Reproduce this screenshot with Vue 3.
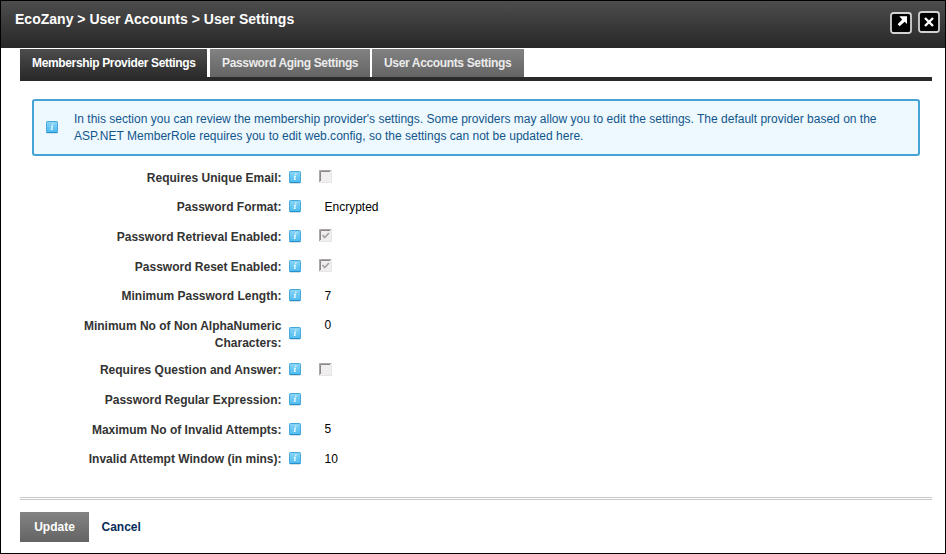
<script setup>
import { h } from 'vue'

const tabs = ['Membership Provider Settings', 'Password Aging Settings', 'User Accounts Settings']

const rows = [
  { label: ['Requires Unique Email:'], box: true, checked: false },
  { label: ['Password Format:'], value: 'Encrypted' },
  { label: ['Password Retrieval Enabled:'], box: true, checked: true },
  { label: ['Password Reset Enabled:'], box: true, checked: true },
  { label: ['Minimum Password Length:'], value: '7' },
  { label: ['Minimum No of Non AlphaNumeric', 'Characters:'], value: '0' },
  { label: ['Requires Question and Answer:'], box: true, checked: false },
  { label: ['Password Regular Expression:'], value: '' },
  { label: ['Maximum No of Invalid Attempts:'], value: '5' },
  { label: ['Invalid Attempt Window (in mins):'], value: '10' },
]

const InfoIcon = () =>
  h('svg', { width: 12, height: 14, viewBox: '0 0 12 14' }, [
    h('defs', [
      h('linearGradient', { id: 'info-fill', x1: 0, y1: 0, x2: 0, y2: 1 }, [
        h('stop', { offset: 0, 'stop-color': '#8bd6f5' }),
        h('stop', { offset: 1, 'stop-color': '#4fbbef' }),
      ]),
    ]),
    h('path', { d: 'M1 12.5H11', stroke: '#d3dfe5', 'stroke-width': 1 }),
    h('rect', { x: 0.5, y: 0.5, width: 11, height: 11, rx: 0.8, fill: 'url(#info-fill)', stroke: '#46a9de' }),
    h('path', { d: 'M0.5 11.5H11.5', stroke: '#2591cf', 'stroke-width': 1 }),
    h('path', { d: 'M6.1 2.5H7.5V3.7H6ZM5 4.8H7.1L6.3 8.2H6.9L6.7 9.1H4.7L5.5 5.7H4.8Z', fill: '#e6f7ff' }),
  ])
</script>

<template>
  <div class="window">
    <header class="titlebar">
      <h1>EcoZany &gt; User Accounts &gt; User Settings</h1>
      <div class="controls">
        <svg class="expand" width="22" height="22" viewBox="0 0 22 22">
          <rect x="1" y="1" width="20" height="20" rx="2.5" fill="#000" stroke="#d2d2d2" stroke-width="1.8" />
          <path d="M9.3 4.3H17V12L14.7 9.8L9.6 14.2L7.6 12.2L12.2 7.4Z" fill="#fff" />
        </svg>
        <svg width="22" height="22" viewBox="0 0 22 22">
          <rect x="1" y="1" width="20" height="20" rx="2.5" fill="#000" stroke="#d2d2d2" stroke-width="1.8" />
          <path d="M7 7L15 15M15 7L7 15" stroke="#fff" stroke-width="2.4" />
        </svg>
      </div>
    </header>

    <nav class="tabs">
      <a v-for="(tab, i) in tabs" :key="tab" class="tab" :class="['tab-' + i, { active: i === 0 }]"><span>{{ tab }}</span></a>
    </nav>

    <section class="notice">
      <InfoIcon />
      <p>
        <span>In this section you can review the membership provider's settings. Some providers may allow you to edit the settings. The default provider based on the</span><br />
        <span class="second">ASP.NET MemberRole requires you to edit web.config, so the settings can not be updated here.</span>
      </p>
    </section>

    <div class="form">
      <div v-for="row in rows" :key="row.label[0]" class="row" :class="{ tall: row.label.length > 1 }">
        <div class="label"><div v-for="line in row.label" :key="line">{{ line }}</div></div>
        <InfoIcon />
        <div class="value" :class="{ boxed: row.box }">
          <svg v-if="row.box" class="check" width="13" height="13" viewBox="0 0 13 13">
            <rect width="13" height="13" fill="#f0eeee" />
            <path d="M0 12.5H12.5V0" fill="none" stroke="#e7e5e5" />
            <path d="M0.5 12V0.5H12" fill="none" stroke="#aba7a7" />
            <path d="M1.5 11V1.5H11" fill="none" stroke="#8b8785" />
            <path v-if="row.checked" d="M3.5 6L5.7 8.6L10 4" fill="none" stroke="#a2a2a2" stroke-width="1.6" />
          </svg>
          <span v-else>{{ row.value }}</span>
        </div>
      </div>
    </div>

    <footer class="footer">
      <button class="update">Update</button>
      <a class="cancel">Cancel</a>
    </footer>
  </div>
</template>

<style>
body {
  margin: 0;
  background: #fff;
}
</style>

<style scoped>
.window {
  box-sizing: border-box;
  width: 946px;
  height: 554px;
  border: 1px solid #000;
  background: #fff;
  font: 12px/17px "Liberation Sans", Arial, sans-serif;
  color: #000;
  overflow: hidden;
  display: flex;
  flex-direction: column;
}
svg {
  display: block;
  flex: none;
}
.titlebar {
  flex: none;
  height: 47px;
  box-sizing: border-box;
  padding: 10px 5px 0 14px;
  display: flex;
  justify-content: space-between;
  background: linear-gradient(#4d4d4d, #272727);
}
h1 {
  margin: 0;
  font-size: 14px;
  line-height: 17px;
  font-weight: bold;
  letter-spacing: 0.01px;
  color: #fff;
  white-space: nowrap;
}
.controls {
  display: flex;
  gap: 6px;
}
.expand {
  margin-top: 1px;
}
.tabs {
  flex: none;
  margin: 1px 13px 0 19px;
  height: 28px;
  display: flex;
  border-bottom: 4px solid #2a2a2b;
}
.tab {
  box-sizing: border-box;
  height: 28px;
  padding: 6px 0 0 12px;
  font-weight: bold;
  letter-spacing: -0.35px;
  color: #ebebeb;
  white-space: nowrap;
  background: linear-gradient(#828282, #646464);
}
.tab-0 {
  width: 187px;
  margin-right: 3px;
}
.tab-1 {
  width: 160px;
  margin-right: 2px;
}
.tab-2 {
  width: 152px;
}
.tab.active {
  color: #fff;
  height: 29px;
  background: linear-gradient(#4d4d4d, #2a2a2b);
}
.notice {
  flex: none;
  box-sizing: border-box;
  margin: 18px 25px 0 31px;
  height: 57px;
  border: 2px solid #46a3d5;
  border-radius: 3px;
  background: #edf8ff;
  color: #12568b;
  padding: 10px 0 0 12px;
  display: flex;
}
.notice svg {
  margin-top: 10px;
}
.notice p {
  margin: 0 0 0 16px;
  white-space: nowrap;
}
.second {
  letter-spacing: 0.01px;
}
.form {
  flex: none;
  margin-top: 14px;
}
.row {
  height: 29.6px;
  display: flex;
}
.row:first-child {
  height: 29.45px;
}
.label {
  width: 280.5px;
  text-align: right;
  font-weight: bold;
  color: #333;
  white-space: nowrap;
}
.row > svg {
  margin: 1px 0 0 7.5px;
}
.row.tall {
  height: 44.5px;
}
.row.tall > svg {
  margin-top: 9px;
}
.value {
  margin-top: -0.5px;
  padding-left: 23.5px;
}
.value.boxed {
  margin-top: 0.45px;
  padding-left: 18px;
}
.footer {
  flex: none;
  margin: 16px 13px 0 19px;
  border-top: 3px double #c8c8c8;
  padding-top: 12px;
  display: flex;
}
.update {
  width: 69px;
  height: 30px;
  border: 0;
  padding: 0;
  color: #fff;
  font: bold 12px/30px "Liberation Sans", Arial, sans-serif;
  background: linear-gradient(#838383, #646464);
}
.cancel {
  margin: 7px 0 0 12.5px;
  font-weight: bold;
  color: #062c5c;
}
</style>
